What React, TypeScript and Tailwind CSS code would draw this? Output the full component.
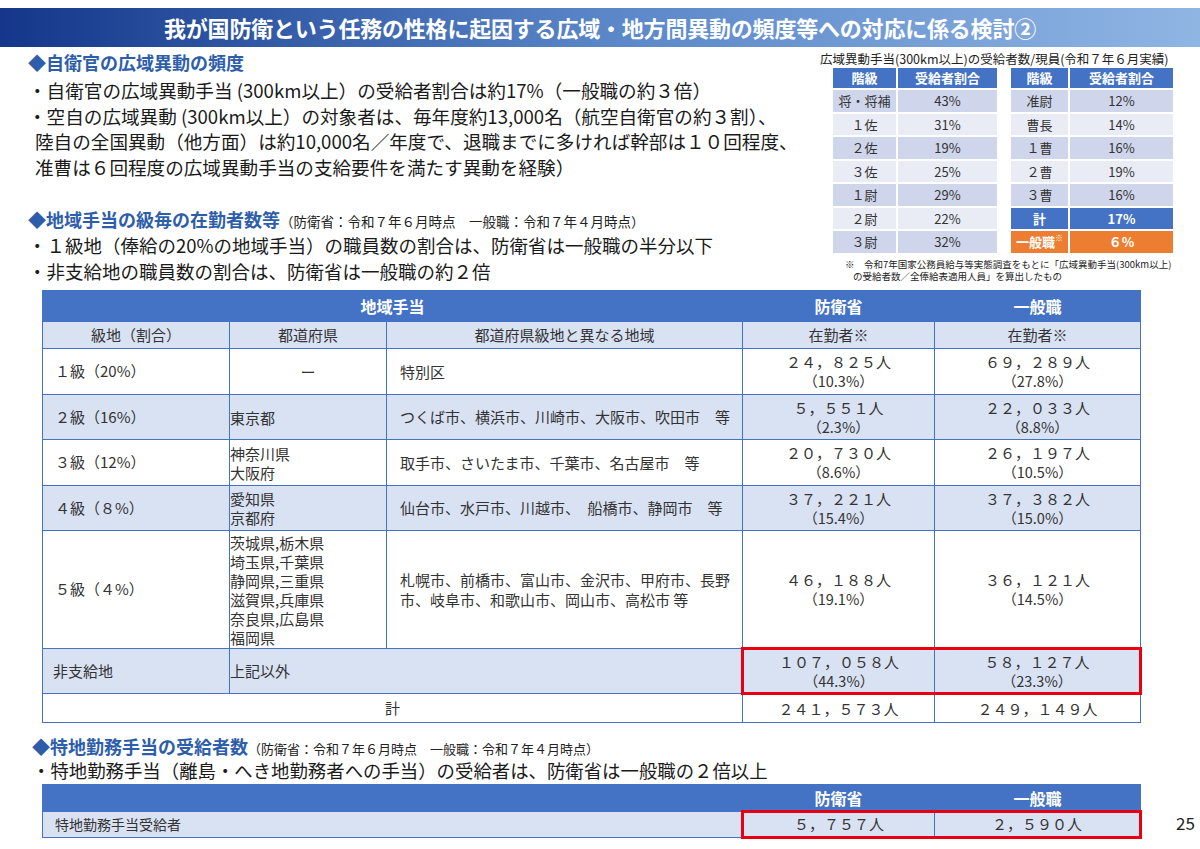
const jp = "font-['Noto_Sans_CJK_JP','Noto_Sans',sans-serif]"

const leftRanks = [
  ["将・将補", "43%"],
  ["１佐", "31%"],
  ["２佐", "19%"],
  ["３佐", "25%"],
  ["１尉", "29%"],
  ["２尉", "22%"],
  ["３尉", "32%"],
]

const rightRanks = [
  ["准尉", "12%"],
  ["曹長", "14%"],
  ["１曹", "16%"],
  ["２曹", "19%"],
  ["３曹", "16%"],
]

const rows = [
  {
    grade: "１級（20%）",
    pref: ["ー"],
    center: true,
    area: ["特別区"],
    mod: ["２４，８２５人", "（10.3%）"],
    gen: ["６９，２８９人", "（27.8%）"],
    shade: false,
    h: "h-[46px]",
  },
  {
    grade: "２級（16%）",
    pref: ["東京都"],
    area: ["つくば市、横浜市、川崎市、大阪市、吹田市　等"],
    mod: ["５，５５１人", "（2.3%）"],
    gen: ["２２，０３３人", "（8.8%）"],
    shade: true,
    h: "h-[45px]",
  },
  {
    grade: "３級（12%）",
    pref: ["神奈川県", "大阪府"],
    area: ["取手市、さいたま市、千葉市、名古屋市　等"],
    mod: ["２０，７３０人", "（8.6%）"],
    gen: ["２６，１９７人", "（10.5%）"],
    shade: false,
    h: "h-[46px]",
  },
  {
    grade: "４級（８%）",
    pref: ["愛知県", "京都府"],
    area: ["仙台市、水戸市、川越市、　船橋市、静岡市　等"],
    mod: ["３７，２２１人", "（15.4%）"],
    gen: ["３７，３８２人", "（15.0%）"],
    shade: true,
    h: "h-[45px]",
  },
  {
    grade: "５級（４%）",
    pref: ["茨城県,栃木県", "埼玉県,千葉県", "静岡県,三重県", "滋賀県,兵庫県", "奈良県,広島県", "福岡県"],
    area: ["札幌市、前橋市、富山市、金沢市、甲府市、長野", "市、岐阜市、和歌山市、岡山市、高松市 等"],
    mod: ["４６，１８８人", "（19.1%）"],
    gen: ["３６，１２１人", "（14.5%）"],
    shade: false,
    h: "h-[118px]",
  },
]

const cell = "border-[1.5px] border-[#4472c4]"

function Count({ v }: { v: string[] }) {
  return (
    <div className="flex flex-col items-center">
      <span className="text-[15px] leading-[18px] text-[#333]">{v[0]}</span>
      {v[1] ? <span className="text-[14.5px] leading-[19px] text-[#333]">{v[1]}</span> : null}
    </div>
  )
}

function RankTable({ data, extra }: { data: string[][]; extra?: boolean }) {
  return (
    <div className="grid grid-cols-[var(--c1)_var(--c2)] gap-x-[2px] text-[13px] text-[#333]">
      <div className="flex h-[20px] items-center justify-center bg-[#4472c4] font-bold text-white">階級</div>
      <div className="flex h-[20px] items-center justify-center bg-[#4472c4] font-bold text-white">受給者割合</div>
      <div className="col-span-2 h-[2px]" />
      {data.map(([r, p], i) => {
        const bg = i % 2 === 0 ? "bg-[#cfd5ea]" : "bg-[#e9ebf5]"
        return (
          <div key={r} className="col-span-2 grid grid-cols-subgrid gap-x-[2px] pb-[2px]">
            <div className={`flex h-[21.5px] items-center justify-center ${bg}`}>{r}</div>
            <div className={`flex h-[21.5px] items-center justify-center ${bg}`}>{p}</div>
          </div>
        )
      })}
      {extra ? (
        <>
          <div className="col-span-2 grid grid-cols-subgrid gap-x-[2px] pb-[2px]">
            <div className="flex h-[21.5px] items-center justify-center bg-[#4472c4] font-bold text-white">計</div>
            <div className="flex h-[21.5px] items-center justify-center bg-[#4472c4] font-bold text-white">17%</div>
          </div>
          <div className="col-span-2 grid grid-cols-subgrid gap-x-[2px]">
            <div className="flex h-[21.5px] items-center justify-center bg-[#ed7d31] font-bold text-white">
              一般職<sup className="text-[8px] font-normal">※</sup>
            </div>
            <div className="flex h-[21.5px] items-center justify-center bg-[#ed7d31] font-bold text-white">６%</div>
          </div>
        </>
      ) : null}
    </div>
  )
}

export default function App() {
  return (
    <div className={`relative h-[849px] w-[1200px] overflow-hidden bg-white text-[#1a1a1a] ${jp}`}>
      {/* title bar */}
      <div className="mt-[8px] flex h-[39px] items-center justify-center bg-linear-to-r from-[#15368a] via-[#5a86c8] to-[#8fb5e3]">
        <h1 className="text-[22px] font-bold tracking-[-0.2px] text-white">
          我が国防衛という任務の性格に起因する広域・地方間異動の頻度等への対応に係る検討②
        </h1>
      </div>

      {/* top area */}
      <div className="flex h-[243px]">
        <div className="w-[800px] whitespace-nowrap pl-[28px]">
          <h2 className="h-[30px] text-[18px] font-bold leading-[30px] text-[#2e5eaa]">◆自衛官の広域異動の頻度</h2>
          <div className="text-[18.6px] leading-[25.5px]">
            <p>・自衛官の広域異動手当 (300km以上）の受給者割合は約17%（一般職の約３倍）</p>
            <p>・空自の広域異動 (300km以上）の対象者は、毎年度約13,000名（航空自衛官の約３割）、</p>
            <p className="pl-[7px]">陸自の全国異動（他方面）は約10,000名／年度で、退職までに多ければ幹部は１０回程度、</p>
            <p className="pl-[7px]">准曹は６回程度の広域異動手当の支給要件を満たす異動を経験）</p>
          </div>
          <h2 className="mt-[27px] h-[26px] leading-[26px] text-[#2e5eaa]">
            <span className="text-[18px] font-bold">◆地域手当の級毎の在勤者数等</span>
            <span className="text-[13.5px] text-[#222]">（防衛省：令和７年６月時点　一般職：令和７年４月時点）</span>
          </h2>
          <div className="text-[18.5px] leading-[26px]">
            <p>・１級地（俸給の20%の地域手当）の職員数の割合は、防衛省は一般職の半分以下</p>
            <p>・非支給地の職員数の割合は、防衛省は一般職の約２倍</p>
          </div>
        </div>

        <div className="ml-[20px] w-[356px] pt-[3px]">
          <p className="h-[18px] text-[12.5px] leading-[18px] text-[#222]">
            広域異動手当(300km以上)の受給者数/現員(令和７年６月実績)
          </p>
          <div className="flex pl-[13px]">
            <div className="[--c1:63px] [--c2:99px]">
              <RankTable data={leftRanks} />
            </div>
            <div className="ml-[14px] [--c1:57px] [--c2:103px]">
              <RankTable data={rightRanks} extra />
            </div>
          </div>
          <div className="mt-[3px] pl-[25px] text-[9.5px] leading-[12px] text-[#222]">
            <p>※　令和7年国家公務員給与等実態調査をもとに「広域異動手当(300km以上)</p>
            <p className="pl-[8px]">の受給者数／全俸給表適用人員」を算出したもの</p>
          </div>
        </div>
      </div>

      {/* main table */}
      <table className="ml-[42px] w-[1098px] table-fixed border-collapse text-[15px] text-[#333]">
        <colgroup>
          <col className="w-[187px]" />
          <col className="w-[157px]" />
          <col className="w-[356px]" />
          <col className="w-[192px]" />
          <col className="w-[206px]" />
        </colgroup>
        <thead>
          <tr className="h-[31px] bg-[#4472c4] text-[16px] font-bold text-white">
            <th colSpan={3} className={cell}>地域手当</th>
            <th className={`${cell} border-l-[#6a90d4]`}>防衛省</th>
            <th className={`${cell} border-l-[#6a90d4]`}>一般職</th>
          </tr>
          <tr className="h-[27px] bg-[#d9e2f3] font-normal">
            <td className={`${cell} text-center`}>級地（割合）</td>
            <td className={`${cell} text-center`}>都道府県</td>
            <td className={`${cell} text-center`}>都道府県級地と異なる地域</td>
            <td className={`${cell} text-center`}>在勤者※</td>
            <td className={`${cell} text-center`}>在勤者※</td>
          </tr>
        </thead>
        <tbody>
          {rows.map((r) => (
            <tr key={r.grade} className={`${r.h} ${r.shade ? "bg-[#d9e2f3]" : "bg-white"}`}>
              <td className={`${cell} pl-[12px]`}>{r.grade}</td>
              <td className={`${cell} leading-[19px] ${r.center ? "text-center" : ""}`}>
                {r.pref.map((p) => (
                  <div key={p}>{p}</div>
                ))}
              </td>
              <td className={`${cell} pl-[13px] leading-[20px]`}>
                {r.area.map((a) => (
                  <div key={a}>{a}</div>
                ))}
              </td>
              <td className={cell}>
                <Count v={r.mod} />
              </td>
              <td className={cell}>
                <Count v={r.gen} />
              </td>
            </tr>
          ))}
          <tr className="h-[45px] bg-[#d9e2f3]">
            <td className={`${cell} pl-[10px]`}>非支給地</td>
            <td colSpan={2} className={cell}>上記以外</td>
            <td className={`${cell} border-y-[3px] border-l-[3px] border-y-[#e60012] border-l-[#e60012]`}>
              <Count v={["１０７，０５８人", "（44.3%）"]} />
            </td>
            <td className={`${cell} border-y-[3px] border-r-[3px] border-y-[#e60012] border-r-[#e60012]`}>
              <Count v={["５８，１２７人", "（23.3%）"]} />
            </td>
          </tr>
          <tr className="h-[29px] bg-white">
            <td colSpan={3} className={`${cell} text-center`}>計</td>
            <td className={cell}>
              <Count v={["２４１，５７３人"]} />
            </td>
            <td className={cell}>
              <Count v={["２４９，１４９人"]} />
            </td>
          </tr>
        </tbody>
      </table>

      {/* bottom section */}
      <div className="pl-[32px] pt-[12px]">
        <h2 className="h-[23px] leading-[23px] text-[#2e5eaa]">
          <span className="text-[18px] font-bold">◆特地勤務手当の受給者数</span>
          <span className="text-[13px] text-[#222]">（防衛省：令和７年６月時点　一般職：令和７年４月時点）</span>
        </h2>
        <p className="h-[24px] text-[18.4px] leading-[24px]">・特地勤務手当（離島・へき地勤務者への手当）の受給者は、防衛省は一般職の２倍以上</p>
      </div>
      <div className="mt-[2px] flex items-end pl-[42px]">
        <table className="w-[1098px] table-fixed border-collapse text-[15px] text-[#333]">
          <colgroup>
            <col className="w-[700px]" />
            <col className="w-[192px]" />
            <col className="w-[206px]" />
          </colgroup>
          <tbody>
            <tr className="h-[27px] bg-[#4472c4] text-[16px] font-bold text-white">
              <td className={cell} />
              <td className={`${cell} text-center`}>防衛省</td>
              <td className={`${cell} text-center`}>一般職</td>
            </tr>
            <tr className="h-[26px] bg-[#d9e2f3]">
              <td className={`${cell} pl-[12px] text-[14px]`}>特地勤務手当受給者</td>
              <td className={`${cell} border-y-[3px] border-l-[3px] border-y-[#e60012] border-l-[#e60012] text-center`}>
                ５，７５７人
              </td>
              <td className={`${cell} border-y-[3px] border-r-[3px] border-y-[#e60012] border-r-[#e60012] text-center`}>
                ２，５９０人
              </td>
            </tr>
          </tbody>
        </table>
        <span className="mb-[4px] ml-[34px] text-[17px] text-[#222]">25</span>
      </div>
    </div>
  )
}
